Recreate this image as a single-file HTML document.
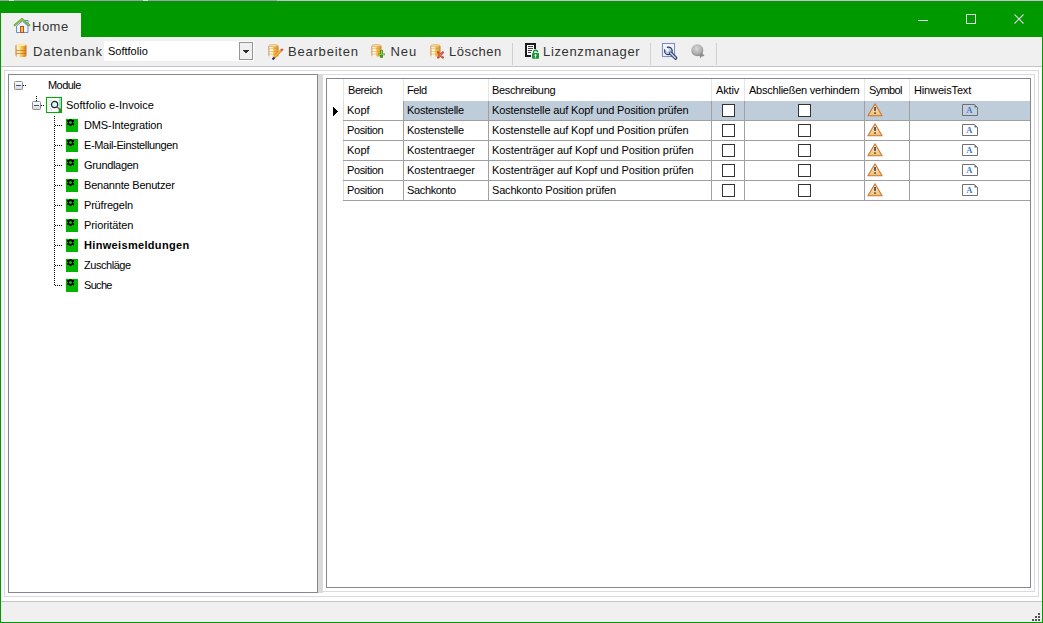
<!DOCTYPE html><html><head><meta charset="utf-8"><style>
html,body{margin:0;padding:0;}
body{width:1043px;height:623px;position:relative;overflow:hidden;background:#fff;font-family:"Liberation Sans",sans-serif;}
div,svg{position:absolute;}
.t{white-space:nowrap;color:#000;}
.tb{color:#333;}
</style></head><body>
<div style="left:0px;top:0px;width:277px;height:1px;background:#a39cab"></div>
<div style="left:277px;top:0px;width:766px;height:1px;background:#c9bec9"></div>
<div style="left:9px;top:0px;width:5px;height:1px;background:#dedcde"></div>
<div style="left:143px;top:0px;width:5px;height:1px;background:#dedcde"></div>
<div style="left:0px;top:1px;width:1043px;height:36px;background:#009900"></div>
<div style="left:0px;top:37px;width:1px;height:586px;background:#009900"></div>
<div style="left:1042px;top:37px;width:1px;height:586px;background:#009900"></div>
<div style="left:0px;top:622px;width:1043px;height:1px;background:#009900"></div>
<div style="left:1px;top:13px;width:80px;height:24px;background:#f0f0f0"></div>
<div style="left:1px;top:37px;width:1041px;height:29px;background:#f0f0f0"></div>
<div style="left:1px;top:66px;width:1041px;height:1px;background:#c4c4c4"></div>
<div style="left:1px;top:601px;width:1041px;height:1px;background:#c4c4c4"></div>
<div style="left:1px;top:602px;width:1041px;height:20px;background:#f0f0f0"></div>
<div style="left:1038px;top:613px;width:2px;height:2px;background:#555"></div>
<div style="left:1035px;top:616px;width:2px;height:2px;background:#555"></div>
<div style="left:1038px;top:616px;width:2px;height:2px;background:#555"></div>
<div style="left:1032px;top:619px;width:2px;height:2px;background:#555"></div>
<div style="left:1035px;top:619px;width:2px;height:2px;background:#555"></div>
<div style="left:1038px;top:619px;width:2px;height:2px;background:#555"></div>
<div style="left:918px;top:20px;width:10px;height:1px;background:#e8e0e8"></div>
<div style="left:966px;top:14px;width:10px;height:10px;box-sizing:border-box;border:1px solid #dcd4dc"></div>
<svg style="left:1013px;top:13px" width="12" height="12" viewBox="0 0 12 12"><path d="M1.5 1.5 L10.5 10.5 M10.5 1.5 L1.5 10.5" stroke="#dcd4dc" stroke-width="1.1"/></svg>
<svg style="left:13px;top:18px" width="18" height="17" viewBox="0 0 18 17">
<rect x="12.5" y="2.5" width="2.5" height="5" fill="#fff" stroke="#6d8ad0" stroke-width="1"/>
<path d="M3.5 8 L3.5 14.5 L15 14.5 L15 8 L9.2 3 Z" fill="#eef3fb" stroke="#6d8ad0" stroke-width="1"/>
<rect x="7.5" y="8.5" width="3" height="6" fill="#f3b45a" stroke="#b85a10" stroke-width="1"/>
<path d="M1 7.8 L9 1 L17 7.8" fill="none" stroke="#5aa010" stroke-width="1.8"/>
<path d="M1.5 7.5 L9 1.2 L16.5 7.5" fill="none" stroke="#b6e060" stroke-width="0.7"/>
</svg>
<div class="t tb" style="left:32px;top:16.50px;font-size:13px;line-height:20px;;letter-spacing:0.5px">Home</div>
<svg style="left:14.5px;top:43px" width="12" height="15" viewBox="0 0 12 15">
<defs><linearGradient id="g14.5" x1="0" x2="1"><stop offset="0" stop-color="#c87a28"/><stop offset="0.2" stop-color="#fffae0"/><stop offset="0.45" stop-color="#f8d870"/><stop offset="0.8" stop-color="#e89830"/><stop offset="1" stop-color="#c87018"/></linearGradient></defs>
<rect x="0.5" y="1" width="11" height="13" rx="2" fill="url(#g14.5)"/>
<path d="M1 7.5 H11 M1 10.5 H11" stroke="#c07020" stroke-width="0.9" opacity="0.75"/>
<ellipse cx="6" cy="1.8" rx="5" ry="1.3" fill="#fce8a8"/>
</svg>
<div class="t tb" style="left:33px;top:41.50px;font-size:13px;line-height:20px;;letter-spacing:0.78px">Datenbank</div>
<div style="left:104px;top:41px;width:150px;height:20px;background:#fff"></div>
<div style="left:239px;top:42px;width:14px;height:18px;box-sizing:border-box;border:1px solid #959595;background:#f0f0f0"></div>
<div style="left:243px;top:50px;width:6px;height:1px;background:#2a2a2a"></div>
<div style="left:244px;top:51px;width:4px;height:1px;background:#2a2a2a"></div>
<div style="left:245px;top:52px;width:2px;height:1px;background:#2a2a2a"></div>
<div class="t " style="left:108px;top:41.19px;font-size:11px;line-height:20px;color:#000;letter-spacing:0px">Softfolio</div>
<svg style="left:268px;top:44px" width="11" height="13" viewBox="0 0 11 13">
<defs><linearGradient id="s268" x1="0" x2="1"><stop offset="0" stop-color="#c87a28"/><stop offset="0.15" stop-color="#fffbe8"/><stop offset="0.4" stop-color="#fff0c0"/><stop offset="0.55" stop-color="#f2bb48"/><stop offset="0.85" stop-color="#e8a030"/><stop offset="1" stop-color="#c87820"/></linearGradient></defs>
<rect x="0.5" y="1" width="10" height="11.5" rx="1.5" fill="url(#s268)"/>
<path d="M1 4.5 H10 M1 7.5 H10 M1 10.2 H10" stroke="#d09040" stroke-width="0.7" opacity="0.55"/>
<ellipse cx="5.5" cy="1.6" rx="4.5" ry="1.1" fill="#f8dc98" stroke="#d89848" stroke-width="0.5"/>
</svg>
<svg style="left:272px;top:47px" width="12" height="13" viewBox="0 0 12 13">
<path d="M2 11 L9.5 3" stroke="#e8941a" stroke-width="2.5"/><path d="M2.5 10 L9 3.2" stroke="#f8d070" stroke-width="0.8"/>
<path d="M9.2 2.2 L10.6 3.6" stroke="#e04848" stroke-width="2.5"/>
<path d="M0.5 12.5 L2.5 10.5" stroke="#203070" stroke-width="2"/>
</svg>
<div class="t tb" style="left:288px;top:41.50px;font-size:13px;line-height:20px;;letter-spacing:0.79px">Bearbeiten</div>
<svg style="left:371px;top:44px" width="11" height="13" viewBox="0 0 11 13">
<defs><linearGradient id="s371" x1="0" x2="1"><stop offset="0" stop-color="#c87a28"/><stop offset="0.15" stop-color="#fffbe8"/><stop offset="0.4" stop-color="#fff0c0"/><stop offset="0.55" stop-color="#f2bb48"/><stop offset="0.85" stop-color="#e8a030"/><stop offset="1" stop-color="#c87820"/></linearGradient></defs>
<rect x="0.5" y="1" width="10" height="11.5" rx="1.5" fill="url(#s371)"/>
<path d="M1 4.5 H10 M1 7.5 H10 M1 10.2 H10" stroke="#d09040" stroke-width="0.7" opacity="0.55"/>
<ellipse cx="5.5" cy="1.6" rx="4.5" ry="1.1" fill="#f8dc98" stroke="#d89848" stroke-width="0.5"/>
</svg>
<svg style="left:377px;top:49px" width="9" height="10" viewBox="0 0 9 10">
<path d="M1 5.3 H8" stroke="#5aa828" stroke-width="2"/>
<path d="M4.5 1 V8.8" stroke="#3a8a18" stroke-width="2.7"/>
<path d="M4.5 1.5 V5" stroke="#9ad858" stroke-width="1"/>
<path d="M1.5 5.3 H7.5" stroke="#b0e878" stroke-width="0.8"/>
</svg>
<div class="t tb" style="left:390.5px;top:41.50px;font-size:13px;line-height:20px;;letter-spacing:0.9px">Neu</div>
<svg style="left:430px;top:44px" width="11" height="13" viewBox="0 0 11 13">
<defs><linearGradient id="s430" x1="0" x2="1"><stop offset="0" stop-color="#c87a28"/><stop offset="0.15" stop-color="#fffbe8"/><stop offset="0.4" stop-color="#fff0c0"/><stop offset="0.55" stop-color="#f2bb48"/><stop offset="0.85" stop-color="#e8a030"/><stop offset="1" stop-color="#c87820"/></linearGradient></defs>
<rect x="0.5" y="1" width="10" height="11.5" rx="1.5" fill="url(#s430)"/>
<path d="M1 4.5 H10 M1 7.5 H10 M1 10.2 H10" stroke="#d09040" stroke-width="0.7" opacity="0.55"/>
<ellipse cx="5.5" cy="1.6" rx="4.5" ry="1.1" fill="#f8dc98" stroke="#d89848" stroke-width="0.5"/>
</svg>
<svg style="left:436px;top:50px" width="9" height="10" viewBox="0 0 9 10">
<path d="M2.2 2.4 L6.8 7.6 M6.8 2.4 L2.2 7.6" stroke="#c04838" stroke-width="2.3" stroke-linecap="round"/>
<path d="M2.5 2.7 L6.5 7.3 M6.5 2.7 L2.5 7.3" stroke="#f0907a" stroke-width="0.8"/>
</svg>
<div class="t tb" style="left:449px;top:41.50px;font-size:13px;line-height:20px;;letter-spacing:0.5px">L&ouml;schen</div>
<div style="left:512px;top:43px;width:1px;height:22px;background:#d0d0d0"></div>
<svg style="left:524px;top:42px" width="17" height="18" viewBox="0 0 17 18">
<rect x="2" y="2" width="9" height="12" fill="#fff"/>
<path d="M7 14 H2 V2 H11 V7" fill="none" stroke="#1a1a1a" stroke-width="2"/>
<path d="M4 4.5 H9 M4 6.5 H9 M4 8.5 H8 M4 10.5 H7" stroke="#444" stroke-width="1"/>
<path d="M9.6 11.5 V10.2 A2 2 0 0 1 13.6 10.2" fill="none" stroke="#1a9a3a" stroke-width="1.4"/>
<rect x="8" y="11" width="7" height="5.8" rx="0.8" fill="#1a9a3a"/>
<circle cx="11.5" cy="13.2" r="1" fill="#fff"/><path d="M11.5 13.5 V15.6" stroke="#fff" stroke-width="1"/>
</svg>
<div class="t tb" style="left:543px;top:41.50px;font-size:13px;line-height:20px;;letter-spacing:0.65px">Lizenzmanager</div>
<div style="left:650px;top:43px;width:1px;height:22px;background:#d0d0d0"></div>
<svg style="left:660px;top:41px" width="20" height="20" viewBox="0 0 20 20">
<defs><mask id="wm"><rect width="20" height="20" fill="#fff"/><rect x="-1.3" y="-7" width="2.6" height="6.8" fill="#000" transform="translate(8.4 9.9) rotate(-45)"/></mask></defs>
<rect x="2.5" y="2.5" width="12" height="13" fill="#f4f6fb" stroke="#7890d0" stroke-width="1.1"/>
<g mask="url(#wm)">
<circle cx="8.4" cy="9.9" r="4.4" fill="#2c3a60"/>
<circle cx="8.4" cy="9.9" r="3.2" fill="#b8c8e6"/>
</g>
<circle cx="7.6" cy="9.1" r="1.2" fill="#f4f6fb"/>
<path d="M10.8 12.3 L15.6 17.1" stroke="#2c3a60" stroke-width="3.6" stroke-linecap="round"/>
<path d="M10.6 12.1 L15.4 16.9" stroke="#b8cce8" stroke-width="1.6" stroke-linecap="round"/>
</svg>
<svg style="left:688px;top:41px" width="20" height="20" viewBox="0 0 20 20">
<defs><radialGradient id="gm" cx="0.45" cy="0.35" r="0.7"><stop offset="0" stop-color="#d8d8d8"/><stop offset="0.6" stop-color="#b0b0b0"/><stop offset="1" stop-color="#808080"/></radialGradient></defs>
<path d="M11 13 L12.5 17.5 L13.5 15.5 L16.5 15 L13.5 11 Z" fill="#8a8a8a"/>
<circle cx="9.3" cy="9.3" r="6" fill="url(#gm)"/>
</svg>
<div style="left:716px;top:43px;width:1px;height:22px;background:#d0d0d0"></div>
<div style="left:4px;top:70px;width:1035px;height:527px;box-sizing:border-box;border:1px solid #dadada"></div>
<div style="left:8px;top:74px;width:310px;height:519px;box-sizing:border-box;border:1px solid #828790"></div>
<div style="left:318px;top:74px;width:5px;height:519px;background:#dcdad8"></div>
<div style="left:322px;top:74px;width:713px;height:518px;box-sizing:border-box;border:1px solid #dadada"></div>
<div style="left:326px;top:78px;width:705px;height:510px;box-sizing:border-box;border:1px solid #828790"></div>
<svg style="left:14px;top:81px" width="9" height="9" viewBox="0 0 9 9">
<defs><linearGradient id="e81" x1="0" y1="0" x2="0" y2="1"><stop offset="0" stop-color="#ffffff"/><stop offset="1" stop-color="#d8d8d8"/></linearGradient></defs>
<rect x="0.5" y="0.5" width="8" height="8" rx="1" fill="url(#e81)" stroke="#8c8c8c"/>
<path d="M2 4.5 H7" stroke="#3850a0" stroke-width="1"/></svg>
<div style="left:23px;top:85px;width:1px;height:1px;background:#000"></div>
<div style="left:25px;top:85px;width:1px;height:1px;background:#000"></div>
<div class="t " style="left:48px;top:75.19px;font-size:11px;line-height:20px;color:#000;letter-spacing:-0.56px">Module</div>
<svg style="left:32px;top:101px" width="9" height="9" viewBox="0 0 9 9">
<defs><linearGradient id="e101" x1="0" y1="0" x2="0" y2="1"><stop offset="0" stop-color="#ffffff"/><stop offset="1" stop-color="#d8d8d8"/></linearGradient></defs>
<rect x="0.5" y="0.5" width="8" height="8" rx="1" fill="url(#e101)" stroke="#8c8c8c"/>
<path d="M2 4.5 H7" stroke="#3850a0" stroke-width="1"/></svg>
<div style="left:36px;top:96px;width:1px;height:1px;background:#000"></div>
<div style="left:36px;top:98px;width:1px;height:1px;background:#000"></div>
<div style="left:36px;top:100px;width:1px;height:1px;background:#000"></div>
<div style="left:41px;top:105px;width:1px;height:1px;background:#000"></div>
<div style="left:43px;top:105px;width:1px;height:1px;background:#000"></div>
<svg style="left:46px;top:97px" width="16" height="16" viewBox="0 0 16 16">
<rect x="0.5" y="0.5" width="15" height="15" fill="#fff" stroke="#00b000"/>
<rect x="12.8" y="1" width="2.2" height="10.5" fill="#a8dcd0"/>
<path d="M12.5 15 L15 15 L15 11.5 L13 11.5 Z" fill="#00b000"/>
<path d="M3 3.5 H6 M2.5 5.5 H4.5 M2.5 7.5 H4.5 M2.5 9.5 H4.5" stroke="#d8d8d8" stroke-width="1"/>
<circle cx="8.6" cy="7.5" r="3.1" fill="#d4fafa" stroke="#222" stroke-width="1.2"/>
<path d="M11 10 L15 13.6" stroke="#7a5a5a" stroke-width="1.3"/>
<path d="M3 12.5 a1.3 1.3 0 1 1 2 1.5" fill="none" stroke="#a8a8f0" stroke-width="1" opacity="0.6"/>
</svg>
<div class="t " style="left:66px;top:95.19px;font-size:11px;line-height:20px;color:#000;letter-spacing:0.03px">Softfolio e-Invoice</div>
<div style="left:54px;top:116px;width:1px;height:1px;background:#000"></div>
<div style="left:54px;top:118px;width:1px;height:1px;background:#000"></div>
<div style="left:54px;top:120px;width:1px;height:1px;background:#000"></div>
<div style="left:54px;top:122px;width:1px;height:1px;background:#000"></div>
<div style="left:54px;top:124px;width:1px;height:1px;background:#000"></div>
<div style="left:54px;top:126px;width:1px;height:1px;background:#000"></div>
<div style="left:54px;top:128px;width:1px;height:1px;background:#000"></div>
<div style="left:54px;top:130px;width:1px;height:1px;background:#000"></div>
<div style="left:54px;top:132px;width:1px;height:1px;background:#000"></div>
<div style="left:54px;top:134px;width:1px;height:1px;background:#000"></div>
<div style="left:54px;top:136px;width:1px;height:1px;background:#000"></div>
<div style="left:54px;top:138px;width:1px;height:1px;background:#000"></div>
<div style="left:54px;top:140px;width:1px;height:1px;background:#000"></div>
<div style="left:54px;top:142px;width:1px;height:1px;background:#000"></div>
<div style="left:54px;top:144px;width:1px;height:1px;background:#000"></div>
<div style="left:54px;top:146px;width:1px;height:1px;background:#000"></div>
<div style="left:54px;top:148px;width:1px;height:1px;background:#000"></div>
<div style="left:54px;top:150px;width:1px;height:1px;background:#000"></div>
<div style="left:54px;top:152px;width:1px;height:1px;background:#000"></div>
<div style="left:54px;top:154px;width:1px;height:1px;background:#000"></div>
<div style="left:54px;top:156px;width:1px;height:1px;background:#000"></div>
<div style="left:54px;top:158px;width:1px;height:1px;background:#000"></div>
<div style="left:54px;top:160px;width:1px;height:1px;background:#000"></div>
<div style="left:54px;top:162px;width:1px;height:1px;background:#000"></div>
<div style="left:54px;top:164px;width:1px;height:1px;background:#000"></div>
<div style="left:54px;top:166px;width:1px;height:1px;background:#000"></div>
<div style="left:54px;top:168px;width:1px;height:1px;background:#000"></div>
<div style="left:54px;top:170px;width:1px;height:1px;background:#000"></div>
<div style="left:54px;top:172px;width:1px;height:1px;background:#000"></div>
<div style="left:54px;top:174px;width:1px;height:1px;background:#000"></div>
<div style="left:54px;top:176px;width:1px;height:1px;background:#000"></div>
<div style="left:54px;top:178px;width:1px;height:1px;background:#000"></div>
<div style="left:54px;top:180px;width:1px;height:1px;background:#000"></div>
<div style="left:54px;top:182px;width:1px;height:1px;background:#000"></div>
<div style="left:54px;top:184px;width:1px;height:1px;background:#000"></div>
<div style="left:54px;top:186px;width:1px;height:1px;background:#000"></div>
<div style="left:54px;top:188px;width:1px;height:1px;background:#000"></div>
<div style="left:54px;top:190px;width:1px;height:1px;background:#000"></div>
<div style="left:54px;top:192px;width:1px;height:1px;background:#000"></div>
<div style="left:54px;top:194px;width:1px;height:1px;background:#000"></div>
<div style="left:54px;top:196px;width:1px;height:1px;background:#000"></div>
<div style="left:54px;top:198px;width:1px;height:1px;background:#000"></div>
<div style="left:54px;top:200px;width:1px;height:1px;background:#000"></div>
<div style="left:54px;top:202px;width:1px;height:1px;background:#000"></div>
<div style="left:54px;top:204px;width:1px;height:1px;background:#000"></div>
<div style="left:54px;top:206px;width:1px;height:1px;background:#000"></div>
<div style="left:54px;top:208px;width:1px;height:1px;background:#000"></div>
<div style="left:54px;top:210px;width:1px;height:1px;background:#000"></div>
<div style="left:54px;top:212px;width:1px;height:1px;background:#000"></div>
<div style="left:54px;top:214px;width:1px;height:1px;background:#000"></div>
<div style="left:54px;top:216px;width:1px;height:1px;background:#000"></div>
<div style="left:54px;top:218px;width:1px;height:1px;background:#000"></div>
<div style="left:54px;top:220px;width:1px;height:1px;background:#000"></div>
<div style="left:54px;top:222px;width:1px;height:1px;background:#000"></div>
<div style="left:54px;top:224px;width:1px;height:1px;background:#000"></div>
<div style="left:54px;top:226px;width:1px;height:1px;background:#000"></div>
<div style="left:54px;top:228px;width:1px;height:1px;background:#000"></div>
<div style="left:54px;top:230px;width:1px;height:1px;background:#000"></div>
<div style="left:54px;top:232px;width:1px;height:1px;background:#000"></div>
<div style="left:54px;top:234px;width:1px;height:1px;background:#000"></div>
<div style="left:54px;top:236px;width:1px;height:1px;background:#000"></div>
<div style="left:54px;top:238px;width:1px;height:1px;background:#000"></div>
<div style="left:54px;top:240px;width:1px;height:1px;background:#000"></div>
<div style="left:54px;top:242px;width:1px;height:1px;background:#000"></div>
<div style="left:54px;top:244px;width:1px;height:1px;background:#000"></div>
<div style="left:54px;top:246px;width:1px;height:1px;background:#000"></div>
<div style="left:54px;top:248px;width:1px;height:1px;background:#000"></div>
<div style="left:54px;top:250px;width:1px;height:1px;background:#000"></div>
<div style="left:54px;top:252px;width:1px;height:1px;background:#000"></div>
<div style="left:54px;top:254px;width:1px;height:1px;background:#000"></div>
<div style="left:54px;top:256px;width:1px;height:1px;background:#000"></div>
<div style="left:54px;top:258px;width:1px;height:1px;background:#000"></div>
<div style="left:54px;top:260px;width:1px;height:1px;background:#000"></div>
<div style="left:54px;top:262px;width:1px;height:1px;background:#000"></div>
<div style="left:54px;top:264px;width:1px;height:1px;background:#000"></div>
<div style="left:54px;top:266px;width:1px;height:1px;background:#000"></div>
<div style="left:54px;top:268px;width:1px;height:1px;background:#000"></div>
<div style="left:54px;top:270px;width:1px;height:1px;background:#000"></div>
<div style="left:54px;top:272px;width:1px;height:1px;background:#000"></div>
<div style="left:54px;top:274px;width:1px;height:1px;background:#000"></div>
<div style="left:54px;top:276px;width:1px;height:1px;background:#000"></div>
<div style="left:54px;top:278px;width:1px;height:1px;background:#000"></div>
<div style="left:54px;top:280px;width:1px;height:1px;background:#000"></div>
<div style="left:54px;top:282px;width:1px;height:1px;background:#000"></div>
<div style="left:54px;top:284px;width:1px;height:1px;background:#000"></div>
<div style="left:55px;top:125px;width:1px;height:1px;background:#000"></div>
<div style="left:57px;top:125px;width:1px;height:1px;background:#000"></div>
<div style="left:59px;top:125px;width:1px;height:1px;background:#000"></div>
<div style="left:61px;top:125px;width:1px;height:1px;background:#000"></div>
<div style="left:65px;top:118px;width:10px;height:1px;background:#eef0dc"></div>
<div style="left:65px;top:119px;width:1px;height:9px;background:#eef0dc"></div>
<svg style="left:66px;top:119px" width="12" height="13" viewBox="0 0 12 13">
<rect x="0" y="0" width="12" height="13" fill="#00b400"/>
<g shape-rendering="crispEdges" fill="#000"><rect x="4" y="0" width="1" height="1"/><rect x="3" y="0" width="1" height="1" opacity="0.55"/><rect x="5" y="0" width="1" height="1" opacity="0.55"/><rect x="1" y="1" width="7" height="1"/><rect x="1" y="2" width="2" height="1"/><rect x="6" y="2" width="2" height="1"/><rect x="2" y="3" width="1" height="1"/><rect x="6" y="3" width="1" height="1"/><rect x="1" y="4" width="2" height="1"/><rect x="6" y="4" width="2" height="1"/><rect x="1" y="5" width="7" height="1"/><rect x="3" y="2" width="1" height="1" opacity="0.5"/><rect x="5" y="2" width="1" height="1" opacity="0.5"/><rect x="3" y="4" width="1" height="1" opacity="0.5"/><rect x="5" y="4" width="1" height="1" opacity="0.5"/><rect x="4" y="6" width="1" height="1"/><rect x="3" y="6" width="1" height="1" opacity="0.55"/><rect x="5" y="6" width="1" height="1" opacity="0.55"/></g>
</svg>
<div class="t " style="left:84px;top:115.19px;font-size:11px;line-height:20px;color:#000;letter-spacing:-0.12px">DMS-Integration</div>
<div style="left:55px;top:145px;width:1px;height:1px;background:#000"></div>
<div style="left:57px;top:145px;width:1px;height:1px;background:#000"></div>
<div style="left:59px;top:145px;width:1px;height:1px;background:#000"></div>
<div style="left:61px;top:145px;width:1px;height:1px;background:#000"></div>
<div style="left:65px;top:138px;width:10px;height:1px;background:#eef0dc"></div>
<div style="left:65px;top:139px;width:1px;height:9px;background:#eef0dc"></div>
<svg style="left:66px;top:139px" width="12" height="13" viewBox="0 0 12 13">
<rect x="0" y="0" width="12" height="13" fill="#00b400"/>
<g shape-rendering="crispEdges" fill="#000"><rect x="4" y="0" width="1" height="1"/><rect x="3" y="0" width="1" height="1" opacity="0.55"/><rect x="5" y="0" width="1" height="1" opacity="0.55"/><rect x="1" y="1" width="7" height="1"/><rect x="1" y="2" width="2" height="1"/><rect x="6" y="2" width="2" height="1"/><rect x="2" y="3" width="1" height="1"/><rect x="6" y="3" width="1" height="1"/><rect x="1" y="4" width="2" height="1"/><rect x="6" y="4" width="2" height="1"/><rect x="1" y="5" width="7" height="1"/><rect x="3" y="2" width="1" height="1" opacity="0.5"/><rect x="5" y="2" width="1" height="1" opacity="0.5"/><rect x="3" y="4" width="1" height="1" opacity="0.5"/><rect x="5" y="4" width="1" height="1" opacity="0.5"/><rect x="4" y="6" width="1" height="1"/><rect x="3" y="6" width="1" height="1" opacity="0.55"/><rect x="5" y="6" width="1" height="1" opacity="0.55"/></g>
</svg>
<div class="t " style="left:84px;top:135.19px;font-size:11px;line-height:20px;color:#000;letter-spacing:-0.35px">E-Mail-Einstellungen</div>
<div style="left:55px;top:165px;width:1px;height:1px;background:#000"></div>
<div style="left:57px;top:165px;width:1px;height:1px;background:#000"></div>
<div style="left:59px;top:165px;width:1px;height:1px;background:#000"></div>
<div style="left:61px;top:165px;width:1px;height:1px;background:#000"></div>
<div style="left:65px;top:158px;width:10px;height:1px;background:#eef0dc"></div>
<div style="left:65px;top:159px;width:1px;height:9px;background:#eef0dc"></div>
<svg style="left:66px;top:159px" width="12" height="13" viewBox="0 0 12 13">
<rect x="0" y="0" width="12" height="13" fill="#00b400"/>
<g shape-rendering="crispEdges" fill="#000"><rect x="4" y="0" width="1" height="1"/><rect x="3" y="0" width="1" height="1" opacity="0.55"/><rect x="5" y="0" width="1" height="1" opacity="0.55"/><rect x="1" y="1" width="7" height="1"/><rect x="1" y="2" width="2" height="1"/><rect x="6" y="2" width="2" height="1"/><rect x="2" y="3" width="1" height="1"/><rect x="6" y="3" width="1" height="1"/><rect x="1" y="4" width="2" height="1"/><rect x="6" y="4" width="2" height="1"/><rect x="1" y="5" width="7" height="1"/><rect x="3" y="2" width="1" height="1" opacity="0.5"/><rect x="5" y="2" width="1" height="1" opacity="0.5"/><rect x="3" y="4" width="1" height="1" opacity="0.5"/><rect x="5" y="4" width="1" height="1" opacity="0.5"/><rect x="4" y="6" width="1" height="1"/><rect x="3" y="6" width="1" height="1" opacity="0.55"/><rect x="5" y="6" width="1" height="1" opacity="0.55"/></g>
</svg>
<div class="t " style="left:84px;top:155.19px;font-size:11px;line-height:20px;color:#000;letter-spacing:-0.32px">Grundlagen</div>
<div style="left:55px;top:185px;width:1px;height:1px;background:#000"></div>
<div style="left:57px;top:185px;width:1px;height:1px;background:#000"></div>
<div style="left:59px;top:185px;width:1px;height:1px;background:#000"></div>
<div style="left:61px;top:185px;width:1px;height:1px;background:#000"></div>
<div style="left:65px;top:178px;width:10px;height:1px;background:#eef0dc"></div>
<div style="left:65px;top:179px;width:1px;height:9px;background:#eef0dc"></div>
<svg style="left:66px;top:179px" width="12" height="13" viewBox="0 0 12 13">
<rect x="0" y="0" width="12" height="13" fill="#00b400"/>
<g shape-rendering="crispEdges" fill="#000"><rect x="4" y="0" width="1" height="1"/><rect x="3" y="0" width="1" height="1" opacity="0.55"/><rect x="5" y="0" width="1" height="1" opacity="0.55"/><rect x="1" y="1" width="7" height="1"/><rect x="1" y="2" width="2" height="1"/><rect x="6" y="2" width="2" height="1"/><rect x="2" y="3" width="1" height="1"/><rect x="6" y="3" width="1" height="1"/><rect x="1" y="4" width="2" height="1"/><rect x="6" y="4" width="2" height="1"/><rect x="1" y="5" width="7" height="1"/><rect x="3" y="2" width="1" height="1" opacity="0.5"/><rect x="5" y="2" width="1" height="1" opacity="0.5"/><rect x="3" y="4" width="1" height="1" opacity="0.5"/><rect x="5" y="4" width="1" height="1" opacity="0.5"/><rect x="4" y="6" width="1" height="1"/><rect x="3" y="6" width="1" height="1" opacity="0.55"/><rect x="5" y="6" width="1" height="1" opacity="0.55"/></g>
</svg>
<div class="t " style="left:84px;top:175.19px;font-size:11px;line-height:20px;color:#000;letter-spacing:-0.21px">Benannte Benutzer</div>
<div style="left:55px;top:205px;width:1px;height:1px;background:#000"></div>
<div style="left:57px;top:205px;width:1px;height:1px;background:#000"></div>
<div style="left:59px;top:205px;width:1px;height:1px;background:#000"></div>
<div style="left:61px;top:205px;width:1px;height:1px;background:#000"></div>
<div style="left:65px;top:198px;width:10px;height:1px;background:#eef0dc"></div>
<div style="left:65px;top:199px;width:1px;height:9px;background:#eef0dc"></div>
<svg style="left:66px;top:199px" width="12" height="13" viewBox="0 0 12 13">
<rect x="0" y="0" width="12" height="13" fill="#00b400"/>
<g shape-rendering="crispEdges" fill="#000"><rect x="4" y="0" width="1" height="1"/><rect x="3" y="0" width="1" height="1" opacity="0.55"/><rect x="5" y="0" width="1" height="1" opacity="0.55"/><rect x="1" y="1" width="7" height="1"/><rect x="1" y="2" width="2" height="1"/><rect x="6" y="2" width="2" height="1"/><rect x="2" y="3" width="1" height="1"/><rect x="6" y="3" width="1" height="1"/><rect x="1" y="4" width="2" height="1"/><rect x="6" y="4" width="2" height="1"/><rect x="1" y="5" width="7" height="1"/><rect x="3" y="2" width="1" height="1" opacity="0.5"/><rect x="5" y="2" width="1" height="1" opacity="0.5"/><rect x="3" y="4" width="1" height="1" opacity="0.5"/><rect x="5" y="4" width="1" height="1" opacity="0.5"/><rect x="4" y="6" width="1" height="1"/><rect x="3" y="6" width="1" height="1" opacity="0.55"/><rect x="5" y="6" width="1" height="1" opacity="0.55"/></g>
</svg>
<div class="t " style="left:84px;top:195.19px;font-size:11px;line-height:20px;color:#000;letter-spacing:-0.19px">Pr&uuml;fregeln</div>
<div style="left:55px;top:225px;width:1px;height:1px;background:#000"></div>
<div style="left:57px;top:225px;width:1px;height:1px;background:#000"></div>
<div style="left:59px;top:225px;width:1px;height:1px;background:#000"></div>
<div style="left:61px;top:225px;width:1px;height:1px;background:#000"></div>
<div style="left:65px;top:218px;width:10px;height:1px;background:#eef0dc"></div>
<div style="left:65px;top:219px;width:1px;height:9px;background:#eef0dc"></div>
<svg style="left:66px;top:219px" width="12" height="13" viewBox="0 0 12 13">
<rect x="0" y="0" width="12" height="13" fill="#00b400"/>
<g shape-rendering="crispEdges" fill="#000"><rect x="4" y="0" width="1" height="1"/><rect x="3" y="0" width="1" height="1" opacity="0.55"/><rect x="5" y="0" width="1" height="1" opacity="0.55"/><rect x="1" y="1" width="7" height="1"/><rect x="1" y="2" width="2" height="1"/><rect x="6" y="2" width="2" height="1"/><rect x="2" y="3" width="1" height="1"/><rect x="6" y="3" width="1" height="1"/><rect x="1" y="4" width="2" height="1"/><rect x="6" y="4" width="2" height="1"/><rect x="1" y="5" width="7" height="1"/><rect x="3" y="2" width="1" height="1" opacity="0.5"/><rect x="5" y="2" width="1" height="1" opacity="0.5"/><rect x="3" y="4" width="1" height="1" opacity="0.5"/><rect x="5" y="4" width="1" height="1" opacity="0.5"/><rect x="4" y="6" width="1" height="1"/><rect x="3" y="6" width="1" height="1" opacity="0.55"/><rect x="5" y="6" width="1" height="1" opacity="0.55"/></g>
</svg>
<div class="t " style="left:84px;top:215.19px;font-size:11px;line-height:20px;color:#000;letter-spacing:-0.07px">Priorit&auml;ten</div>
<div style="left:55px;top:245px;width:1px;height:1px;background:#000"></div>
<div style="left:57px;top:245px;width:1px;height:1px;background:#000"></div>
<div style="left:59px;top:245px;width:1px;height:1px;background:#000"></div>
<div style="left:61px;top:245px;width:1px;height:1px;background:#000"></div>
<div style="left:65px;top:238px;width:10px;height:1px;background:#eef0dc"></div>
<div style="left:65px;top:239px;width:1px;height:9px;background:#eef0dc"></div>
<svg style="left:66px;top:239px" width="12" height="13" viewBox="0 0 12 13">
<rect x="0" y="0" width="12" height="13" fill="#00b400"/>
<g shape-rendering="crispEdges" fill="#000"><rect x="4" y="0" width="1" height="1"/><rect x="3" y="0" width="1" height="1" opacity="0.55"/><rect x="5" y="0" width="1" height="1" opacity="0.55"/><rect x="1" y="1" width="7" height="1"/><rect x="1" y="2" width="2" height="1"/><rect x="6" y="2" width="2" height="1"/><rect x="2" y="3" width="1" height="1"/><rect x="6" y="3" width="1" height="1"/><rect x="1" y="4" width="2" height="1"/><rect x="6" y="4" width="2" height="1"/><rect x="1" y="5" width="7" height="1"/><rect x="3" y="2" width="1" height="1" opacity="0.5"/><rect x="5" y="2" width="1" height="1" opacity="0.5"/><rect x="3" y="4" width="1" height="1" opacity="0.5"/><rect x="5" y="4" width="1" height="1" opacity="0.5"/><rect x="4" y="6" width="1" height="1"/><rect x="3" y="6" width="1" height="1" opacity="0.55"/><rect x="5" y="6" width="1" height="1" opacity="0.55"/></g>
</svg>
<div class="t " style="left:84px;top:235.19px;font-size:11px;line-height:20px;color:#000;font-weight:bold;letter-spacing:0.33px">Hinweismeldungen</div>
<div style="left:55px;top:265px;width:1px;height:1px;background:#000"></div>
<div style="left:57px;top:265px;width:1px;height:1px;background:#000"></div>
<div style="left:59px;top:265px;width:1px;height:1px;background:#000"></div>
<div style="left:61px;top:265px;width:1px;height:1px;background:#000"></div>
<div style="left:65px;top:258px;width:10px;height:1px;background:#eef0dc"></div>
<div style="left:65px;top:259px;width:1px;height:9px;background:#eef0dc"></div>
<svg style="left:66px;top:259px" width="12" height="13" viewBox="0 0 12 13">
<rect x="0" y="0" width="12" height="13" fill="#00b400"/>
<g shape-rendering="crispEdges" fill="#000"><rect x="4" y="0" width="1" height="1"/><rect x="3" y="0" width="1" height="1" opacity="0.55"/><rect x="5" y="0" width="1" height="1" opacity="0.55"/><rect x="1" y="1" width="7" height="1"/><rect x="1" y="2" width="2" height="1"/><rect x="6" y="2" width="2" height="1"/><rect x="2" y="3" width="1" height="1"/><rect x="6" y="3" width="1" height="1"/><rect x="1" y="4" width="2" height="1"/><rect x="6" y="4" width="2" height="1"/><rect x="1" y="5" width="7" height="1"/><rect x="3" y="2" width="1" height="1" opacity="0.5"/><rect x="5" y="2" width="1" height="1" opacity="0.5"/><rect x="3" y="4" width="1" height="1" opacity="0.5"/><rect x="5" y="4" width="1" height="1" opacity="0.5"/><rect x="4" y="6" width="1" height="1"/><rect x="3" y="6" width="1" height="1" opacity="0.55"/><rect x="5" y="6" width="1" height="1" opacity="0.55"/></g>
</svg>
<div class="t " style="left:84px;top:255.19px;font-size:11px;line-height:20px;color:#000;letter-spacing:-0.45px">Zuschl&auml;ge</div>
<div style="left:55px;top:285px;width:1px;height:1px;background:#000"></div>
<div style="left:57px;top:285px;width:1px;height:1px;background:#000"></div>
<div style="left:59px;top:285px;width:1px;height:1px;background:#000"></div>
<div style="left:61px;top:285px;width:1px;height:1px;background:#000"></div>
<div style="left:65px;top:278px;width:10px;height:1px;background:#eef0dc"></div>
<div style="left:65px;top:279px;width:1px;height:9px;background:#eef0dc"></div>
<svg style="left:66px;top:279px" width="12" height="13" viewBox="0 0 12 13">
<rect x="0" y="0" width="12" height="13" fill="#00b400"/>
<g shape-rendering="crispEdges" fill="#000"><rect x="4" y="0" width="1" height="1"/><rect x="3" y="0" width="1" height="1" opacity="0.55"/><rect x="5" y="0" width="1" height="1" opacity="0.55"/><rect x="1" y="1" width="7" height="1"/><rect x="1" y="2" width="2" height="1"/><rect x="6" y="2" width="2" height="1"/><rect x="2" y="3" width="1" height="1"/><rect x="6" y="3" width="1" height="1"/><rect x="1" y="4" width="2" height="1"/><rect x="6" y="4" width="2" height="1"/><rect x="1" y="5" width="7" height="1"/><rect x="3" y="2" width="1" height="1" opacity="0.5"/><rect x="5" y="2" width="1" height="1" opacity="0.5"/><rect x="3" y="4" width="1" height="1" opacity="0.5"/><rect x="5" y="4" width="1" height="1" opacity="0.5"/><rect x="4" y="6" width="1" height="1"/><rect x="3" y="6" width="1" height="1" opacity="0.55"/><rect x="5" y="6" width="1" height="1" opacity="0.55"/></g>
</svg>
<div class="t " style="left:84px;top:275.19px;font-size:11px;line-height:20px;color:#000;letter-spacing:-0.68px">Suche</div>
<div style="left:403px;top:101px;width:627px;height:19px;background:#bfcddb"></div>
<div style="left:343px;top:79px;width:1px;height:22px;background:#e6e6e6"></div>
<div style="left:403px;top:79px;width:1px;height:22px;background:#e6e6e6"></div>
<div style="left:488px;top:79px;width:1px;height:22px;background:#e6e6e6"></div>
<div style="left:711px;top:79px;width:1px;height:22px;background:#e6e6e6"></div>
<div style="left:744px;top:79px;width:1px;height:22px;background:#e6e6e6"></div>
<div style="left:864px;top:79px;width:1px;height:22px;background:#e6e6e6"></div>
<div style="left:909px;top:79px;width:1px;height:22px;background:#e6e6e6"></div>
<div style="left:343px;top:101px;width:1px;height:100px;background:#dcdcdc"></div>
<div style="left:403px;top:101px;width:1px;height:100px;background:#a0a0a0"></div>
<div style="left:488px;top:101px;width:1px;height:100px;background:#a0a0a0"></div>
<div style="left:711px;top:101px;width:1px;height:100px;background:#a0a0a0"></div>
<div style="left:744px;top:101px;width:1px;height:100px;background:#a0a0a0"></div>
<div style="left:864px;top:101px;width:1px;height:100px;background:#a0a0a0"></div>
<div style="left:909px;top:101px;width:1px;height:100px;background:#a0a0a0"></div>
<div style="left:343px;top:120px;width:687px;height:1px;background:#a0a0a0"></div>
<div style="left:343px;top:140px;width:687px;height:1px;background:#a0a0a0"></div>
<div style="left:343px;top:160px;width:687px;height:1px;background:#a0a0a0"></div>
<div style="left:343px;top:180px;width:687px;height:1px;background:#a0a0a0"></div>
<div style="left:343px;top:200px;width:687px;height:1px;background:#a0a0a0"></div>
<div class="t " style="left:348px;top:80.19px;font-size:11px;line-height:20px;;letter-spacing:-0.43px">Bereich</div>
<div class="t " style="left:407px;top:80.19px;font-size:11px;line-height:20px;;letter-spacing:-0.43px">Feld</div>
<div class="t " style="left:492px;top:80.19px;font-size:11px;line-height:20px;;letter-spacing:-0.34px">Beschreibung</div>
<div class="t " style="left:716px;top:80.19px;font-size:11px;line-height:20px;;letter-spacing:-0.15px">Aktiv</div>
<div class="t " style="left:749px;top:80.19px;font-size:11px;line-height:20px;;letter-spacing:-0.23px">Abschlie&szlig;en verhindern</div>
<div class="t " style="left:869px;top:80.19px;font-size:11px;line-height:20px;;letter-spacing:-0.66px">Symbol</div>
<div class="t " style="left:914px;top:80.19px;font-size:11px;line-height:20px;;letter-spacing:-0.14px">HinweisText</div>
<div class="t " style="left:347px;top:100.19px;font-size:11px;line-height:20px;;letter-spacing:0px">Kopf</div>
<div class="t " style="left:407px;top:100.19px;font-size:11px;line-height:20px;;letter-spacing:-0.25px">Kostenstelle</div>
<div class="t " style="left:492px;top:100.19px;font-size:11px;line-height:20px;;letter-spacing:-0.13px">Kostenstelle auf Kopf und Position pr&uuml;fen</div>
<div style="left:722px;top:104px;width:13px;height:13px;box-sizing:border-box;border:1px solid #333;background:#fff"></div>
<div style="left:798px;top:104px;width:13px;height:13px;box-sizing:border-box;border:1px solid #333;background:#fff"></div>
<svg style="left:867px;top:103px" width="16" height="14" viewBox="0 0 16 14">
<defs><linearGradient id="w0" x1="0" y1="0" x2="0" y2="1"><stop offset="0" stop-color="#fff6e0"/><stop offset="1" stop-color="#f2bd66"/></linearGradient></defs>
<path d="M8 0.9 L15.1 12.8 L0.9 12.8 Z" fill="url(#w0)" stroke="#c87a3a" stroke-width="1.1" stroke-linejoin="round"/>
<rect x="7.2" y="4" width="1.6" height="3.9" fill="#3a3a48"/><rect x="7.2" y="9.3" width="1.6" height="1.5" fill="#3a3a48"/>
</svg>
<svg style="left:962px;top:104px" width="16" height="12" viewBox="0 0 16 12">
<path d="M0.5 0.5 H12.5 L15.5 3.5 V11.5 H0.5 Z" fill="#c4d0de" stroke="#707070"/>
<path d="M12.5 0.5 L15.5 3.5 L12.5 3.5 Z" fill="#707070"/>
<text x="7.3" y="8.9" font-family="Liberation Serif" font-weight="bold" font-size="8.5" fill="#3a7ad0" text-anchor="middle">A</text>
</svg>
<div class="t " style="left:347px;top:120.19px;font-size:11px;line-height:20px;;letter-spacing:-0.36px">Position</div>
<div class="t " style="left:407px;top:120.19px;font-size:11px;line-height:20px;;letter-spacing:-0.25px">Kostenstelle</div>
<div class="t " style="left:492px;top:120.19px;font-size:11px;line-height:20px;;letter-spacing:-0.13px">Kostenstelle auf Kopf und Position pr&uuml;fen</div>
<div style="left:722px;top:124px;width:13px;height:13px;box-sizing:border-box;border:1px solid #333;background:#fff"></div>
<div style="left:798px;top:124px;width:13px;height:13px;box-sizing:border-box;border:1px solid #333;background:#fff"></div>
<svg style="left:867px;top:123px" width="16" height="14" viewBox="0 0 16 14">
<defs><linearGradient id="w1" x1="0" y1="0" x2="0" y2="1"><stop offset="0" stop-color="#fff6e0"/><stop offset="1" stop-color="#f2bd66"/></linearGradient></defs>
<path d="M8 0.9 L15.1 12.8 L0.9 12.8 Z" fill="url(#w1)" stroke="#c87a3a" stroke-width="1.1" stroke-linejoin="round"/>
<rect x="7.2" y="4" width="1.6" height="3.9" fill="#3a3a48"/><rect x="7.2" y="9.3" width="1.6" height="1.5" fill="#3a3a48"/>
</svg>
<svg style="left:962px;top:124px" width="16" height="12" viewBox="0 0 16 12">
<path d="M0.5 0.5 H12.5 L15.5 3.5 V11.5 H0.5 Z" fill="#fff" stroke="#707070"/>
<path d="M12.5 0.5 L15.5 3.5 L12.5 3.5 Z" fill="#707070"/>
<text x="7.3" y="8.9" font-family="Liberation Serif" font-weight="bold" font-size="8.5" fill="#3a7ad0" text-anchor="middle">A</text>
</svg>
<div class="t " style="left:347px;top:140.19px;font-size:11px;line-height:20px;;letter-spacing:0px">Kopf</div>
<div class="t " style="left:407px;top:140.19px;font-size:11px;line-height:20px;;letter-spacing:-0.09px">Kostentraeger</div>
<div class="t " style="left:492px;top:140.19px;font-size:11px;line-height:20px;;letter-spacing:-0.08px">Kostentr&auml;ger auf Kopf und Position pr&uuml;fen</div>
<div style="left:722px;top:144px;width:13px;height:13px;box-sizing:border-box;border:1px solid #333;background:#fff"></div>
<div style="left:798px;top:144px;width:13px;height:13px;box-sizing:border-box;border:1px solid #333;background:#fff"></div>
<svg style="left:867px;top:143px" width="16" height="14" viewBox="0 0 16 14">
<defs><linearGradient id="w2" x1="0" y1="0" x2="0" y2="1"><stop offset="0" stop-color="#fff6e0"/><stop offset="1" stop-color="#f2bd66"/></linearGradient></defs>
<path d="M8 0.9 L15.1 12.8 L0.9 12.8 Z" fill="url(#w2)" stroke="#c87a3a" stroke-width="1.1" stroke-linejoin="round"/>
<rect x="7.2" y="4" width="1.6" height="3.9" fill="#3a3a48"/><rect x="7.2" y="9.3" width="1.6" height="1.5" fill="#3a3a48"/>
</svg>
<svg style="left:962px;top:144px" width="16" height="12" viewBox="0 0 16 12">
<path d="M0.5 0.5 H12.5 L15.5 3.5 V11.5 H0.5 Z" fill="#fff" stroke="#707070"/>
<path d="M12.5 0.5 L15.5 3.5 L12.5 3.5 Z" fill="#707070"/>
<text x="7.3" y="8.9" font-family="Liberation Serif" font-weight="bold" font-size="8.5" fill="#3a7ad0" text-anchor="middle">A</text>
</svg>
<div class="t " style="left:347px;top:160.19px;font-size:11px;line-height:20px;;letter-spacing:-0.36px">Position</div>
<div class="t " style="left:407px;top:160.19px;font-size:11px;line-height:20px;;letter-spacing:-0.09px">Kostentraeger</div>
<div class="t " style="left:492px;top:160.19px;font-size:11px;line-height:20px;;letter-spacing:-0.08px">Kostentr&auml;ger auf Kopf und Position pr&uuml;fen</div>
<div style="left:722px;top:164px;width:13px;height:13px;box-sizing:border-box;border:1px solid #333;background:#fff"></div>
<div style="left:798px;top:164px;width:13px;height:13px;box-sizing:border-box;border:1px solid #333;background:#fff"></div>
<svg style="left:867px;top:163px" width="16" height="14" viewBox="0 0 16 14">
<defs><linearGradient id="w3" x1="0" y1="0" x2="0" y2="1"><stop offset="0" stop-color="#fff6e0"/><stop offset="1" stop-color="#f2bd66"/></linearGradient></defs>
<path d="M8 0.9 L15.1 12.8 L0.9 12.8 Z" fill="url(#w3)" stroke="#c87a3a" stroke-width="1.1" stroke-linejoin="round"/>
<rect x="7.2" y="4" width="1.6" height="3.9" fill="#3a3a48"/><rect x="7.2" y="9.3" width="1.6" height="1.5" fill="#3a3a48"/>
</svg>
<svg style="left:962px;top:164px" width="16" height="12" viewBox="0 0 16 12">
<path d="M0.5 0.5 H12.5 L15.5 3.5 V11.5 H0.5 Z" fill="#fff" stroke="#707070"/>
<path d="M12.5 0.5 L15.5 3.5 L12.5 3.5 Z" fill="#707070"/>
<text x="7.3" y="8.9" font-family="Liberation Serif" font-weight="bold" font-size="8.5" fill="#3a7ad0" text-anchor="middle">A</text>
</svg>
<div class="t " style="left:347px;top:180.19px;font-size:11px;line-height:20px;;letter-spacing:-0.36px">Position</div>
<div class="t " style="left:407px;top:180.19px;font-size:11px;line-height:20px;;letter-spacing:-0.35px">Sachkonto</div>
<div class="t " style="left:492px;top:180.19px;font-size:11px;line-height:20px;;letter-spacing:-0.18px">Sachkonto Position pr&uuml;fen</div>
<div style="left:722px;top:184px;width:13px;height:13px;box-sizing:border-box;border:1px solid #333;background:#fff"></div>
<div style="left:798px;top:184px;width:13px;height:13px;box-sizing:border-box;border:1px solid #333;background:#fff"></div>
<svg style="left:867px;top:183px" width="16" height="14" viewBox="0 0 16 14">
<defs><linearGradient id="w4" x1="0" y1="0" x2="0" y2="1"><stop offset="0" stop-color="#fff6e0"/><stop offset="1" stop-color="#f2bd66"/></linearGradient></defs>
<path d="M8 0.9 L15.1 12.8 L0.9 12.8 Z" fill="url(#w4)" stroke="#c87a3a" stroke-width="1.1" stroke-linejoin="round"/>
<rect x="7.2" y="4" width="1.6" height="3.9" fill="#3a3a48"/><rect x="7.2" y="9.3" width="1.6" height="1.5" fill="#3a3a48"/>
</svg>
<svg style="left:962px;top:184px" width="16" height="12" viewBox="0 0 16 12">
<path d="M0.5 0.5 H12.5 L15.5 3.5 V11.5 H0.5 Z" fill="#fff" stroke="#707070"/>
<path d="M12.5 0.5 L15.5 3.5 L12.5 3.5 Z" fill="#707070"/>
<text x="7.3" y="8.9" font-family="Liberation Serif" font-weight="bold" font-size="8.5" fill="#3a7ad0" text-anchor="middle">A</text>
</svg>
<div style="left:333px;top:107px;width:1px;height:9px;background:#000"></div>
<div style="left:334px;top:108px;width:1px;height:7px;background:#000"></div>
<div style="left:335px;top:109px;width:1px;height:5px;background:#000"></div>
<div style="left:336px;top:110px;width:1px;height:3px;background:#000"></div>
<div style="left:337px;top:111px;width:1px;height:1px;background:#000"></div>
</body></html>
